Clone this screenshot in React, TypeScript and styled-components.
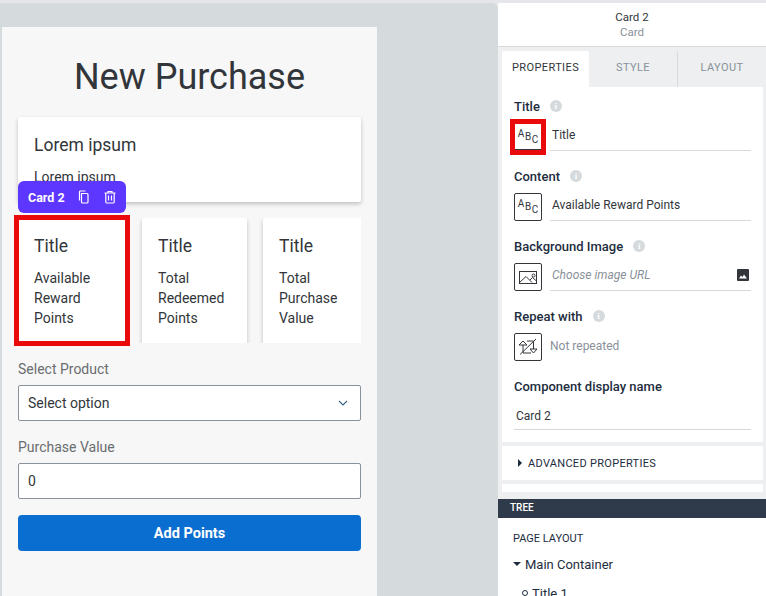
import React from 'react';
import styled, { createGlobalStyle } from 'styled-components';

const Global = createGlobalStyle`
  html, body { margin: 0; padding: 0; height: 100%; overflow: hidden; }
  body { font-family: Roboto, "Noto Sans", Arial, sans-serif; color: #32363a; }
`;

const Page = styled.div`
  display: flex;
  width: 766px;
  height: 596px;
  padding-top: 3px;
  box-sizing: border-box;
  overflow: hidden;
  background: #e4e6ea;
`;
const Stage = styled.div`
  width: 498px;
  flex: none;
  padding: 24px 0 0 2px;
  box-sizing: border-box;
  background: #d5dadd;
  border-top-right-radius: 6px;
`;
const Canvas = styled.main`
  width: 375px;
  height: 569px;
  box-sizing: border-box;
  background: #f7f7f7;
  padding: 0 16px;
`;
const Heading = styled.h1`
  margin: 0;
  height: 90px;
  font-size: 36px;
  font-weight: 400;
  line-height: 100px;
  text-align: center;
  color: #32363a;
`;
const Card = styled.div<{ $w?: number }>`
  position: relative;
  box-sizing: border-box;
  background: #fff;
  border-radius: 2px;
  box-shadow: 0 2px 4px rgba(0, 0, 0, 0.22);
  padding: 16px;
  width: ${(p) => (p.$w ? `${p.$w}px` : 'auto')};
  height: ${(p) => (p.$w ? '132px' : 'auto')};
  flex: none;
`;
const CardTitle = styled.div`
  font-size: 17.5px;
  line-height: 24px;
  color: #32363a;
`;
const CardText = styled.div`
  margin-top: 10px;
  font-size: 14px;
  line-height: 20px;
  color: #32363a;
`;
const Hero = styled(Card)`
  height: 85px;
`;
const CardRow = styled.div`
  display: flex;
  align-items: flex-start;
  gap: 16px;
  height: 125px;
  margin-top: 16px;
  overflow: hidden;
`;
const CardStack = styled.div`
  position: relative;
`;
const Selection = styled.div`
  position: absolute;
  left: -4px;
  top: 98px;
  width: 116px;
  height: 131px;
  box-sizing: border-box;
  border: 5px solid #e90b0b;
  pointer-events: none;
`;
const ActionBar = styled.div`
  position: absolute;
  left: 0;
  top: 64px;
  width: 108px;
  height: 32px;
  box-sizing: border-box;
  padding-left: 10px;
  display: flex;
  align-items: center;
  gap: 12px;
  background: #5d36ff;
  border-radius: 6px;
  color: #fff;
  font-size: 12.5px;
  font-weight: 700;
`;
const ActionIcon = styled.svg`
  width: 14px;
  height: 14px;
  fill: none;
  stroke: #fff;
  stroke-width: 1.2;
`;
const FieldLabel = styled.div`
  margin-top: 16px;
  font-size: 14px;
  line-height: 20px;
  color: #6a6d70;
`;
const Control = styled.div`
  margin-top: 6px;
  height: 36px;
  box-sizing: border-box;
  background: #fff;
  border: 1px solid #89919a;
  border-radius: 2px;
  padding: 0 12px 0 9px;
  display: flex;
  align-items: center;
  justify-content: space-between;
  font-size: 14px;
  color: #32363a;
`;
const PrimaryButton = styled.button`
  display: block;
  width: 100%;
  height: 36px;
  margin-top: 16px;
  border: 0;
  border-radius: 4px;
  background: #0a6ed1;
  color: #fff;
  font: 700 14.5px Roboto, sans-serif;
`;
const Side = styled.aside`
  width: 268px;
  flex: none;
  background: #edeff0;
  display: flex;
  flex-direction: column;
  overflow: hidden;
`;
const SideHeader = styled.header`
  height: 44px;
  flex: none;
  box-sizing: border-box;
  padding-top: 7px;
  background: #fff;
  border-bottom: 1px solid #d9d9d9;
  text-align: center;
  font-size: 11.5px;
  line-height: 15px;
`;
const SideSub = styled.div`
  color: #89919a;
`;
const Tabs = styled.div`
  display: flex;
  height: 36px;
  flex: none;
  margin: 4px 0 0 4px;
`;
const Tab = styled.div<{ $active?: boolean; $w: number; $rule?: boolean }>`
  width: ${(p) => p.$w}px;
  flex: none;
  box-sizing: border-box;
  text-align: center;
  line-height: 34px;
  font-size: 11px;
  letter-spacing: 0.4px;
  color: ${(p) => (p.$active ? '#32363a' : '#89919a')};
  background: ${(p) => (p.$active ? '#fff' : 'transparent')};
  border-right: ${(p) => (p.$rule ? '1px solid #d5dadd' : '0')};
  border-radius: 2px 2px 0 0;
`;
const Section = styled.section<{ $h: number }>`
  flex: none;
  height: ${(p) => p.$h}px;
  box-sizing: border-box;
  margin: 0 3px 4px 4px;
  background: #fff;
`;
const Form = styled(Section)`
  padding: 10px 12px 0 12px;
`;
const PropLabel = styled.div`
  display: flex;
  align-items: center;
  gap: 10px;
  height: 18px;
  font-size: 13px;
  font-weight: 500;
  color: #1d2d3e;
`;
const Info = styled.span`
  width: 12px;
  height: 12px;
  border-radius: 50%;
  background: #d5dadd;
  color: #fff;
  font: 700 9px/12px "Liberation Serif", serif;
  text-align: center;
`;
const PropRow = styled.div`
  display: flex;
  align-items: stretch;
  gap: 8px;
  height: 28px;
  margin: 8px 0 16px;
`;
const IconBox = styled.div<{ $marked?: boolean }>`
  position: relative;
  width: 28px;
  height: 28px;
  flex: none;
  box-sizing: border-box;
  border: 1px solid #32363a;
  border-radius: ${(p) => (p.$marked ? '0' : '2px')};
  display: flex;
  align-items: center;
  justify-content: center;
  ${(p) =>
    p.$marked
      ? 'outline: 5px solid #e90b0b; outline-offset: -1px; box-shadow: inset 0 -1px #32363a;'
      : ''}
`;
const AbcMark = styled.div`
  display: flex;
  align-items: flex-start;
  font-size: 10px;
  line-height: 10px;
  color: #32363a;
  height: 16px;
  gap: 0.5px;
`;
const AbcLetter = styled.span<{ $drop: number }>`
  margin-top: ${(p) => p.$drop}px;
`;
const BoxIcon = styled.svg`
  width: 20px;
  height: 20px;
  fill: none;
  stroke: #32363a;
  stroke-width: 1;
`;
const PropInput = styled.div<{ $muted?: boolean }>`
  flex: 1;
  display: flex;
  align-items: center;
  justify-content: space-between;
  box-sizing: border-box;
  padding: 0 2px 3px 2px;
  border-bottom: 1px solid #d9d9d9;
  font-size: 12px;
  font-style: ${(p) => (p.$muted ? 'italic' : 'normal')};
  color: ${(p) => (p.$muted ? '#89919a' : '#32363a')};
`;
const PlainValue = styled.div`
  display: flex;
  align-items: center;
  padding-bottom: 3px;
  font-size: 12px;
  color: #89919a;
`;
const NameInput = styled.div`
  height: 35px;
  box-sizing: border-box;
  padding: 13px 2px 0;
  border-bottom: 1px solid #d9d9d9;
  font-size: 12px;
  line-height: 16px;
`;
const Advanced = styled(Section)`
  display: flex;
  align-items: center;
  gap: 6px;
  padding-left: 16px;
  font-size: 11px;
  letter-spacing: 0.3px;
  color: #1d2d3e;
`;
const Caret = styled.span<{ $down?: boolean }>`
  width: 0;
  height: 0;
  ${(p) =>
    p.$down
      ? 'border-left: 4px solid transparent; border-right: 4px solid transparent; border-top: 4px solid #1d2d3e;'
      : 'border-top: 4px solid transparent; border-bottom: 4px solid transparent; border-left: 4px solid #1d2d3e;'}
`;
const TreeBar = styled.div`
  flex: none;
  height: 19px;
  margin-top: 3px;
  padding-left: 12px;
  background: #2f3a4a;
  color: #fff;
  font-size: 10px;
  font-weight: 500;
  line-height: 18px;
`;
const Tree = styled.div`
  flex: 1;
  background: #fff;
  padding: 13px 15px 0;
`;
const TreeHead = styled.div`
  font-size: 11px;
  line-height: 16px;
  color: #1d2d3e;
`;
const TreeNode = styled.div<{ $indent?: number }>`
  display: flex;
  align-items: center;
  gap: 4px;
  margin-top: ${(p) => (p.$indent ? 11 : 8)}px;
  padding-left: ${(p) => p.$indent ?? 0}px;
  height: 18px;
  font-size: 13px;
  color: #1d2d3e;
`;
const Dot = styled.span`
  width: 4px;
  height: 4px;
  border: 1px solid #1d2d3e;
  border-radius: 50%;
`;

const AbcIcon = () => (
  <AbcMark>
    <AbcLetter $drop={0}>A</AbcLetter>
    <AbcLetter $drop={3}>B</AbcLetter>
    <AbcLetter $drop={6}>C</AbcLetter>
  </AbcMark>
);

export default function App() {
  return (
    <Page>
      <Global />
      <Stage>
        <Canvas>
          <Heading>New Purchase</Heading>
          <CardStack>
            <Hero>
              <CardTitle>Lorem ipsum</CardTitle>
              <CardText>Lorem ipsum</CardText>
            </Hero>
            <CardRow>
              <Card $w={108}>
                <CardTitle>Title</CardTitle>
                <CardText>Available Reward Points</CardText>
              </Card>
              <Card $w={105}>
                <CardTitle>Title</CardTitle>
                <CardText>Total Redeemed Points</CardText>
              </Card>
              <Card $w={105}>
                <CardTitle>Title</CardTitle>
                <CardText>Total Purchase Value</CardText>
              </Card>
            </CardRow>
            <Selection />
            <ActionBar>
              Card 2
              <ActionIcon viewBox="0 0 14 14">
                <path d="M4.5 3.5h5.5a1 1 0 0 1 1 1v7.5a1 1 0 0 1-1 1H5.5a1 1 0 0 1-1-1z" />
                <path d="M2.5 10.5V2a1 1 0 0 1 1-1h5" />
              </ActionIcon>
              <ActionIcon viewBox="0 0 14 14">
                <path d="M1.5 3h11M5 3V1.5h4V3M2.8 3v9a1.2 1.2 0 0 0 1.2 1h6a1.2 1.2 0 0 0 1.2-1V3M5.5 5.5v5M8.5 5.5v5" />
              </ActionIcon>
            </ActionBar>
          </CardStack>
          <FieldLabel>Select Product</FieldLabel>
          <Control>
            Select option
            <svg width="10" height="10" viewBox="0 0 10 10" fill="none" stroke="#346187" strokeWidth="1.1">
              <path d="M1 3l4 4 4-4" />
            </svg>
          </Control>
          <FieldLabel>Purchase Value</FieldLabel>
          <Control>0</Control>
          <PrimaryButton>Add Points</PrimaryButton>
        </Canvas>
      </Stage>
      <Side>
        <SideHeader>
          Card 2
          <SideSub>Card</SideSub>
        </SideHeader>
        <Tabs>
          <Tab $active $w={87}>PROPERTIES</Tab>
          <Tab $w={89} $rule>STYLE</Tab>
          <Tab $w={88}>LAYOUT</Tab>
        </Tabs>
        <Form $h={355}>
          <PropLabel>Title <Info>i</Info></PropLabel>
          <PropRow>
            <IconBox $marked><AbcIcon /></IconBox>
            <PropInput>Title</PropInput>
          </PropRow>
          <PropLabel>Content <Info>i</Info></PropLabel>
          <PropRow>
            <IconBox><AbcIcon /></IconBox>
            <PropInput>Available Reward Points</PropInput>
          </PropRow>
          <PropLabel>Background Image <Info>i</Info></PropLabel>
          <PropRow>
            <IconBox>
              <BoxIcon viewBox="0 0 20 20">
                <rect x="1.5" y="4.5" width="17" height="12" />
                <path d="M1.5 15.5L8 9.5l6 6M12 13l2.5-2.5 4 3.5" />
                <circle cx="15.5" cy="8.5" r="1.5" />
              </BoxIcon>
            </IconBox>
            <PropInput $muted>
              Choose image URL
              <svg width="12" height="12" viewBox="0 0 12 12">
                <rect width="12" height="12" rx="1" fill="#32363a" />
                <path d="M2 9.5l2-3 1.5 1.5L7 5.5l3 4z" fill="#fff" />
              </svg>
            </PropInput>
          </PropRow>
          <PropLabel>Repeat with <Info>i</Info></PropLabel>
          <PropRow>
            <IconBox>
              <BoxIcon viewBox="0 0 20 20">
                <path d="M1 8h8L5 4zM5 8v8h8M12 12h7l-3.5 4zM15.5 12V4H9M2 17.5L18 2" />
              </BoxIcon>
            </IconBox>
            <PlainValue>Not repeated</PlainValue>
          </PropRow>
          <PropLabel>Component display name</PropLabel>
          <NameInput>Card 2</NameInput>
        </Form>
        <Advanced $h={34}><Caret />ADVANCED PROPERTIES</Advanced>
        <Section $h={8} />
        <TreeBar>TREE</TreeBar>
        <Tree>
          <TreeHead>PAGE LAYOUT</TreeHead>
          <TreeNode><Caret $down />Main Container</TreeNode>
          <TreeNode $indent={9}><Dot />Title 1</TreeNode>
        </Tree>
      </Side>
    </Page>
  );
}
